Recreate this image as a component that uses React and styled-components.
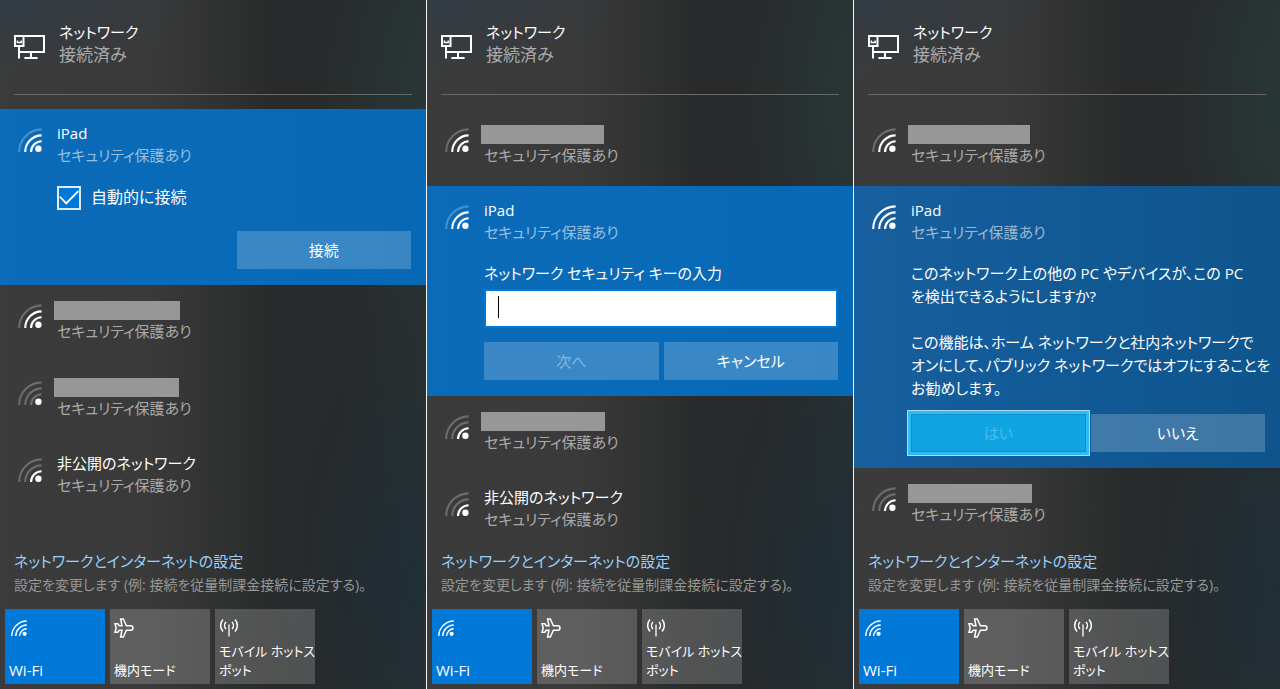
import React from 'react';
import styled, { createGlobalStyle, css } from 'styled-components';

const SECURED = 'セキュリティ保護あり';

export default function App() {
  return (
    <>
      <GlobalStyle />
      <Screens>
        <Flyout>
          <Network name="iPad" signal={2} active>
            <CheckLabel>
              <Checkbox type="checkbox" defaultChecked />
              自動的に接続
            </CheckLabel>
            <Actions $top={21}>
              <Button $last>接続</Button>
            </Actions>
          </Network>
          <Network mask={126} signal={2} />
          <Network mask={125} signal={0} />
          <Network name="非公開のネットワーク" signal={1} />
        </Flyout>

        <Flyout>
          <Network mask={123} signal={2} />
          <Network name="iPad" signal={2} active>
            <KeyLabel htmlFor="network-key">ネットワーク セキュリティ キーの入力</KeyLabel>
            <KeyInput id="network-key" type="text" />
            <Actions $top={14}>
              <Button disabled>次へ</Button>
              <Button>キャンセル</Button>
            </Actions>
          </Network>
          <Network mask={124} signal={1} />
          <Network name="非公開のネットワーク" signal={1} />
        </Flyout>

        <Flyout>
          <Network mask={122} signal={2} />
          <Network name="iPad" signal={3} active dim>
            <Message>
              このネットワーク上の他の PC やデバイスが、この PC
              <br />
              を検出できるようにしますか?
            </Message>
            <Message>
              この機能は、ホーム ネットワークと社内ネットワークで
              <br />
              オンにして、パブリック ネットワークではオフにすることを
              <br />
              お勧めします。
            </Message>
            <Actions $top={14}>
              <Button $pressed>はい</Button>
              <Button>いいえ</Button>
            </Actions>
          </Network>
          <Network mask={124} signal={1} />
        </Flyout>
      </Screens>
    </>
  );
}

function Flyout({ children }) {
  return (
    <Panel>
      <Header>
        <EthernetIcon />
        <div>
          <Name>ネットワーク</Name>
          <Status $large>接続済み</Status>
        </div>
      </Header>
      <List>{children}</List>
      <Footer>
        <SettingsLink href="#settings">ネットワークとインターネットの設定</SettingsLink>
        <Hint>設定を変更します (例: 接続を従量制課金接続に設定する)。</Hint>
        <Tiles>
          <Tile $on>
            <TileIcon>
              <WifiIcon size={16} signal={3} />
            </TileIcon>
            <span>Wi-Fi</span>
          </Tile>
          <Tile>
            <TileIcon>
              <PlaneIcon />
            </TileIcon>
            <span>機内モード</span>
          </Tile>
          <Tile>
            <TileIcon>
              <HotspotIcon />
            </TileIcon>
            <span>
              モバイル ホットス
              <br />
              ポット
            </span>
          </Tile>
        </Tiles>
      </Footer>
    </Panel>
  );
}

function Network({ name, mask, signal, active, dim, children }) {
  return (
    <Item $active={active} $dim={dim}>
      <WifiIcon size={24} signal={signal} />
      <Details>
        <Name>{name || <Mask $width={mask} />}</Name>
        <Status>{SECURED}</Status>
        {children && <Body>{children}</Body>}
      </Details>
    </Item>
  );
}

// signal: number of lit arcs, counted from the dot outwards
function WifiIcon({ size, signal }) {
  const arcs = [
    'M13 24A10.8 10.8 0 0 1 23.6 13.2',
    'M7.2 24A16.6 16.6 0 0 1 23.6 7.4',
    'M1.2 24A22.6 22.6 0 0 1 23.6 1.4',
  ];
  return (
    <svg width={size} height={size} viewBox="0 0 24 24" fill="none" stroke="#fff" strokeWidth="2.1">
      {arcs.map((d, i) => (
        <path key={d} d={d} opacity={i < signal ? 1 : 0.25} />
      ))}
      <circle cx="20.4" cy="20.7" r="3.2" fill="#fff" stroke="none" />
    </svg>
  );
}

function EthernetIcon() {
  return (
    <svg width="32" height="26" viewBox="0 0 32 26" fill="none" stroke="#fff" strokeWidth="2">
      <path d="M10 2H30V18H5" />
      <path d="M1 2H9.5V12H1Z" />
      <path d="M3.4 6.4V8.6H7.2V6.4" strokeWidth="1.5" />
      <path d="M5 12V24.4M17 18V23.6M10.4 24H23.6" />
    </svg>
  );
}

function PlaneIcon() {
  return (
    <svg width="20" height="20" viewBox="0 0 20 20" fill="none" stroke="#fff" strokeWidth="1.5" strokeLinejoin="miter">
      <path d="M6.6 1H9.3L12.4 7.8H16.8A2.2 2.2 0 0 1 16.8 12.2H12.4L9.3 19H6.6L8 12.2H5.2L3.8 14.2H1L2.2 10L1 5.8H3.8L5.2 7.8H8Z" />
    </svg>
  );
}

function HotspotIcon() {
  return (
    <svg width="20" height="20" viewBox="0 0 20 20" fill="none" stroke="#fff" strokeWidth="1.5">
      <path d="M4 1.6A8.6 8.6 0 0 0 4 13.4M16 1.6A8.6 8.6 0 0 1 16 13.4" />
      <path d="M7 4A5 5 0 0 0 7 11M13 4A5 5 0 0 1 13 11" />
      <path d="M10 6.6V18.6" strokeWidth="1.3" />
    </svg>
  );
}

const GlobalStyle = createGlobalStyle`
  body {
    margin: 0;
    background: #f4f4f4;
  }

  *, *::before, *::after {
    box-sizing: border-box;
  }

  body, button, input {
    font-family: 'Open Sans', 'Noto Sans CJK JP', sans-serif;
    font-size: 15px;
    font-feature-settings: 'palt';
  }
`;

const Screens = styled.main`
  display: grid;
  grid-template-columns: repeat(3, minmax(0, 1fr));
  gap: 1px;
  min-height: 100vh;
`;

const Panel = styled.section`
  display: flex;
  flex-direction: column;
  color: #fff;
  line-height: 23px;
  white-space: nowrap;
  overflow: hidden;
  background:
    radial-gradient(ellipse 200px 80px at 0 0, rgba(44, 60, 74, 0.6), transparent),
    radial-gradient(ellipse 150px 260px at 100% 85%, rgba(26, 46, 58, 0.6), transparent),
    radial-gradient(ellipse 130px 230px at 100% 15%, rgba(40, 58, 58, 0.6), transparent),
    linear-gradient(to right, #3b3b3b 0%, #3a3a3a 35%, #303131 52%, #292a2b 64%, #282a2b 80%, #293031 100%);
`;

const Header = styled.header`
  display: flex;
  gap: 13px;
  height: 95px;
  margin: 0 14px 14px;
  padding-top: 21px;
  border-bottom: 1px solid #686868;

  svg {
    margin-top: 13px;
  }
`;

const List = styled.div`
  flex: 1;
`;

const Item = styled.article`
  display: flex;
  gap: 15px;
  padding: 13px 15px 19px 18px;

  > svg {
    flex: none;
    margin-top: 6px;
  }

  ${({ $active, $dim }) =>
    $active &&
    css`
      padding-bottom: 16px;
      background: ${$dim
        ? 'linear-gradient(to right, #175f9e, #115994 60%, #0f548c)'
        : 'linear-gradient(to right, #0b6bb8, #0769b6)'};
    `}
`;

const Details = styled.div`
  flex: 1;
  min-width: 0;
`;

const Name = styled.div`
  height: 22px;
`;

const Status = styled.div`
  font-size: ${({ $large }) => ($large ? 17 : 15)}px;
  color: rgba(255, 255, 255, 0.58);
`;

const Mask = styled.span`
  display: block;
  width: ${({ $width }) => $width}px;
  height: 22px;
  margin-left: -3px;
  border-top: 3px solid transparent;
  background: #979797 padding-box;
`;

const Body = styled.div`
  margin-top: 18px;
`;

const CheckLabel = styled.label`
  display: flex;
  align-items: center;
  gap: 10px;
  height: 25px;
  font-size: 16px;
`;

const Checkbox = styled.input`
  appearance: none;
  width: 24px;
  height: 24px;
  margin: 0;
  border: 2px solid #dcebf7;

  &:checked {
    background: #0078d7;
  }

  &:checked::after {
    content: '';
    display: block;
    height: 20px;
    background: #fff;
    clip-path: polygon(0 48%, 8% 44%, 36% 72%, 94% 14%, 100% 21%, 36% 86%);
  }
`;

const KeyLabel = styled.label`
  display: block;
`;

const KeyInput = styled.input`
  display: block;
  width: 100%;
  height: 39px;
  margin-top: 4px;
  padding: 0 12px;
  border: 2px solid #0078d7;
  outline: none;
  color: #000;
  background: linear-gradient(#000, #000) 12px 5px / 1px 22px no-repeat #fff;
`;

const Message = styled.p`
  margin: 0;

  & + & {
    margin-top: 23px;
  }
`;

const Actions = styled.div`
  display: grid;
  grid-template-columns: 1fr 1fr;
  gap: 5px;
  margin-top: ${({ $top }) => $top}px;
`;

const Button = styled.button`
  height: 38px;
  padding: 0 0 2px;
  border: 0;
  color: #fff;
  background: rgba(255, 255, 255, 0.2);

  ${({ $last }) => $last && 'grid-column: 2;'}

  &:disabled {
    color: rgba(255, 255, 255, 0.4);
  }

  ${({ $pressed }) =>
    $pressed &&
    css`
      color: #48bdee;
      background: #10a4e3;
      border: 1px solid #0c8fce;
      box-shadow: 0 0 0 3px #2fbcf2, 0 0 0 4px #a9dcf5;
    `}
`;

const Footer = styled.footer`
  padding: 0 5px 5px;
`;

const SettingsLink = styled.a`
  display: block;
  padding-left: 9px;
  color: #99d0fb;
  text-decoration: none;
`;

const Hint = styled.p`
  margin: 0 0 13px;
  padding-left: 9px;
  font-size: 14px;
  color: #979797;
`;

const Tiles = styled.div`
  display: flex;
  gap: 5px;
`;

const Tile = styled.button`
  display: flex;
  flex-direction: column;
  justify-content: space-between;
  align-items: flex-start;
  width: 100px;
  height: 75px;
  padding: 9px 4px 4px;
  border: 0;
  font-size: ${({ $on }) => ($on ? 15 : 13)}px;
  line-height: 19px;
  text-align: left;
  color: #fff;
  background: ${({ $on }) => ($on ? '#0078d7' : 'rgba(255, 255, 255, 0.19)')};
`;

const TileIcon = styled.span`
  display: grid;
  place-items: center;
  width: 20px;
  height: 20px;
`;
